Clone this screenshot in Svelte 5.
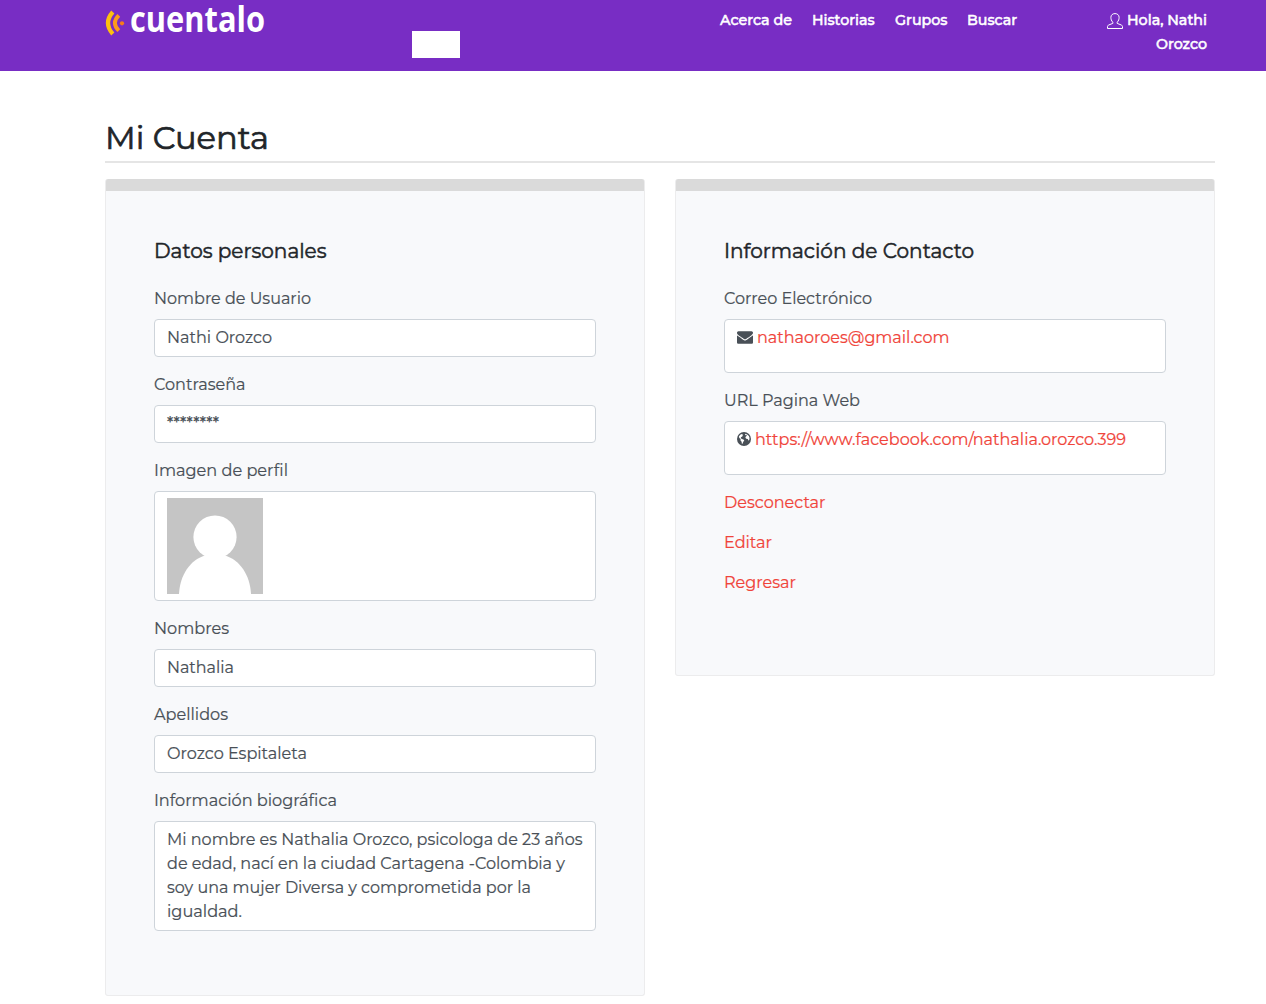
<script lang="ts">
  // Stretches a line of text horizontally to its set width.
  function fit(node: HTMLElement, width: number) {
    const apply = () => {
      node.style.transform = 'none';
      node.style.marginRight = '0';
      const natural = node.getBoundingClientRect().width;
      node.style.transform = `scaleX(${width / natural})`;
      node.style.marginRight = `${width - natural}px`;
    };
    apply();
    document.fonts.ready.then(apply);
  }

  type Line = [string, number];
  type Field = { label: Line; lines?: Line[]; stars?: boolean };

  const nav: Line[] = [['Acerca de', 72], ['Historias', 62.5], ['Grupos', 52.5], ['Buscar', 50]];
  const fields: Field[] = [
    { label: ['Nombre de Usuario', 157], lines: [['Nathi Orozco', 105]] },
    { label: ['Contraseña', 91.5], lines: [['********', 52]], stars: true },
    { label: ['Imagen de perfil', 134] },
    { label: ['Nombres', 75], lines: [['Nathalia', 67]] },
    { label: ['Apellidos', 74], lines: [['Orozco Espitaleta', 140]] },
    {
      label: ['Información biográfica', 183],
      lines: [
        ['Mi nombre es Nathalia Orozco, psicologa de 23 años', 415.5],
        ['de edad, nací en la ciudad Cartagena -Colombia y', 398],
        ['soy una mujer Diversa y comprometida por la', 364],
        ['igualdad.', 75]
      ]
    }
  ];
  const actions: Line[] = [['Desconectar', 101.5], ['Editar', 48], ['Regresar', 72]];
</script>

{#snippet txt(line: Line)}<span class="fit" use:fit={line[1]}>{line[0]}</span>{/snippet}

<header>
  <div class="brand">
    <svg class="waves" width="20" height="26" viewBox="0 0 20 26" fill="none">
      <path d="M7.800 2Q-1.800 13 7.800 24" stroke="#fdc010" stroke-width="4.200" />
      <path d="M13.800 5.400Q6 13 13.800 20.600" stroke="#fb9a1c" stroke-width="4" />
      <circle cx="17" cy="13.300" r="2.100" fill="#f97b18" />
    </svg>
    <span class="logo">{@render txt(['cuentalo', 135])}</span>
  </div>
  <div class="blank"></div>
  <nav>
    {#each nav as item}<a href="#top">{@render txt(item)}</a>{/each}
  </nav>
  <div class="user">
    <svg width="16" height="16" viewBox="0 0 16 16" fill="none" stroke="#fff">
      <path d="M5.800 9.200C4.300 7.800 3.900 6.100 3.900 4.300C3.900 2 5.700.6 8 .6s4.100 1.400 4.100 3.700c0 1.800-.4 3.500-1.900 4.900v1.200l3.900 1.500c1 .4 1.400 1.100 1.400 2v1.600H.5v-1.600c0-.9.4-1.600 1.400-2l3.900-1.500z" />
    </svg>
    <div class="name">
      <div>{@render txt(['Hola, Nathi', 80])}</div>
      <div>{@render txt(['Orozco', 51])}</div>
    </div>
  </div>
</header>

<main>
  <h2>{@render txt(['Mi Cuenta', 164])}</h2>
  <div class="cards">
    <section>
      <h5>{@render txt(['Datos personales', 172.5])}</h5>
      {#each fields as f}
        <div class="group">
          <div class="label">{@render txt(f.label)}</div>
          <div class="box" class:stars={f.stars}>
            {#if f.lines}
              {#each f.lines as l}<div class="line">{@render txt(l)}</div>{/each}
            {:else}
              <svg class="avatar" width="96" height="96" viewBox="0 0 96 96">
                <rect width="96" height="96" fill="#c5c5c5" />
                <circle cx="48" cy="39" r="21.600" fill="#fff" />
                <path d="M12 96C13 77 23 62 38 57.500H58C73 62 83 77 84 96z" fill="#fff" />
              </svg>
            {/if}
          </div>
        </div>
      {/each}
    </section>
    <section class="contact">
      <h5>{@render txt(['Información de Contacto', 250])}</h5>
      <div class="group">
        <div class="label">{@render txt(['Correo Electrónico', 148])}</div>
        <div class="box tall">
          <div class="line">
            <svg class="icon" width="16" height="16" viewBox="0 0 1792 1792" fill="#495057">
              <path d="M1792 710v794q0 66-47 113t-113 47h-1472q-66 0-113-47t-47-113v-794q44 49 101 87 362 246 497 345 57 42 92.500 65.500t94.500 48 110 24.500h2q51 0 110-24.500t94.500-48 92.500-65.500q170-123 498-345 57-39 100-87zm0-294q0 79-49 151t-122 123q-376 261-468 325-10 7-42.500 31t-54 38.500-52 32.500-57.500 27-50 9h-2q-23 0-50-9t-57.500-27-52-32.500-54-38.500-42.500-31q-91-64-262-182.500t-205-142.500q-62-42-117-115.500t-55-136.500q0-78 41.500-130t118.500-52h1472q65 0 112.500 47t47.500 113z" />
            </svg>
            <a href="#mail">{@render txt(['nathaoroes@gmail.com', 192.5])}</a>
          </div>
        </div>
      </div>
      <div class="group">
        <div class="label">{@render txt(['URL Pagina Web', 136])}</div>
        <div class="box tall">
          <div class="line">
            <svg class="icon globe" width="14" height="14" viewBox="0 0 14 14">
              <circle cx="7" cy="7" r="7" fill="#495057" />
              <path d="M1.900 4.400L3.200 2.700 4.900 1.900l.9.300-.6 1 1 .4-1 1-1.200.7-.2.900 1.100.7 1.600.6.800 1.100-1 1.200-.8 1.900-.6.300-.3-2.200-1.100-1.400.1-1.300-1.300-1.100zM8.200 1.800l2 .6 1.700 1.500.6 1.900-.1 1.800-.9 1.100-.7-1.700-1.500-.2-.9-1 .4-1.300 1.300-.7-1.100-.8-.9.3z" fill="#fff" />
            </svg>
            <a href="#web">{@render txt(['https://www.facebook.com/nathalia.orozco.399', 371])}</a>
          </div>
        </div>
      </div>
      {#each actions as a}<p><a href="#action">{@render txt(a)}</a></p>{/each}
    </section>
  </div>
</main>

<style>
  :global(body) {
    background: #fff;
    color: #495057;
    font: 16px/24px Montserrat, Inter, sans-serif;
    -webkit-text-stroke: 0.2px;
  }
  header {
    display: flex;
    box-sizing: border-box;
    height: 71px;
    padding-left: 105px;
    background: #782dc4;
    color: #fff;
    font-size: 15px;
    font-weight: 500;
    -webkit-text-stroke: 0.5px;
  }
  header a { color: #fff; }
  a { color: #f0443a; text-decoration: none; }
  .fit { display: inline-block; white-space: nowrap; transform-origin: left center; }
  .brand { display: flex; width: 307px; }
  .waves { margin-top: 10px; }
  .logo { margin-left: 5px; font: 700 35px/38px "Open Sans", sans-serif; -webkit-text-stroke: 0; }
  .blank { width: 48px; height: 27px; margin-top: 31px; background: #fff; }
  nav { display: flex; gap: 20px; width: 387px; margin-left: 260px; padding-top: 8px; box-sizing: border-box; }
  .user { display: flex; gap: 4px; padding-top: 8px; }
  .user svg { margin-top: 5px; }
  .name { text-align: right; }
  main { width: 1110px; margin-left: 105px; padding-top: 48px; }
  h2 {
    margin: 0 0 16px;
    height: 42px;
    border-bottom: 2px solid #e5e5e5;
    color: #212529;
    font-size: 32px;
    font-weight: 400;
    line-height: 38px;
    -webkit-text-stroke: 0.7px;
  }
  .cards { display: flex; gap: 30px; align-items: flex-start; }
  section {
    box-sizing: border-box;
    width: 540px;
    padding: 60px 48px 48px;
    border: 1px solid #ececed;
    border-top: 0;
    border-radius: 3px;
    background: linear-gradient(#dadada 12px, #f8f9fb 12px);
  }
  .contact { padding-bottom: 64px; }
  h5 {
    margin: 0 0 24px;
    color: #212529;
    font-size: 20px;
    font-weight: 400;
    line-height: 24px;
    -webkit-text-stroke: 0.5px;
  }
  .label { height: 24px; margin-bottom: 8px; line-height: 23px; }
  .group { margin-bottom: 16px; }
  .box { padding: 6px 12px; border: 1px solid #ced4da; border-radius: 4px; background: #fff; }
  .stars { font-weight: 500; }
  .stars .line { line-height: 22px; }
  .tall { padding-bottom: 22px; }
  .line { display: flex; align-items: flex-start; height: 24px; gap: 4px; line-height: 23px; }
  .icon { margin-top: 3px; }
  .globe { margin-top: 4px; }
  .avatar { display: block; }
  p { height: 24px; margin: 0 0 16px; line-height: 23px; }
</style>
